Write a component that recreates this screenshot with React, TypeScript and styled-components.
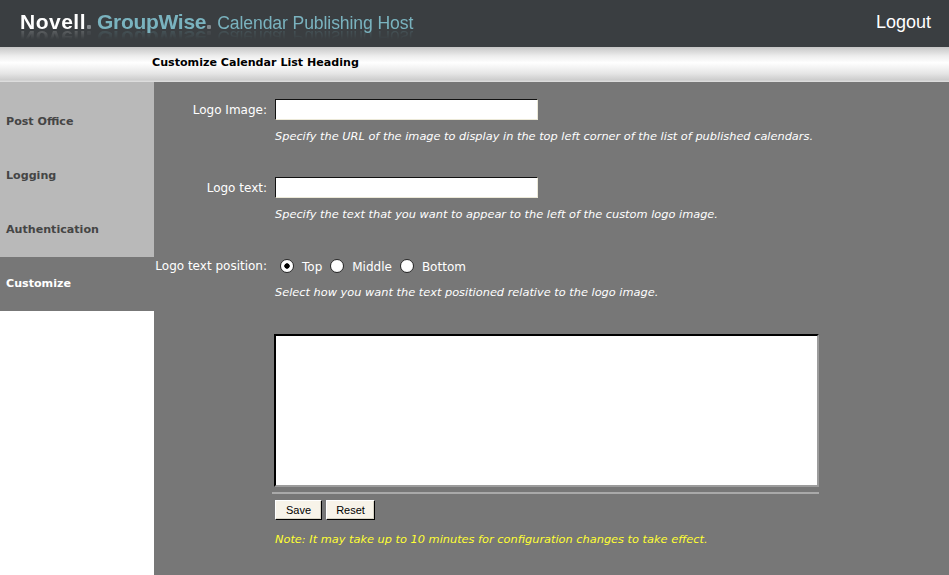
import React from "react";
import styled, { createGlobalStyle } from "styled-components";

const Global = createGlobalStyle`
  html, body { margin: 0; padding: 0; background: #ffffff; }
  body { font-family: "DejaVu Sans", Verdana, sans-serif; }
  * { box-sizing: border-box; }
`;

const Page = styled.div`
  min-height: 100vh;
  display: flex;
  flex-direction: column;
`;

const Header = styled.header`
  height: 47px;
  background: #3a3e41;
  display: flex;
  align-items: center;
  justify-content: space-between;
  padding: 0 18px 2px 20px;
  font-family: "Liberation Sans", Arial, sans-serif;
`;

const Title = styled.div`
  display: flex;
  align-items: baseline;
  white-space: nowrap;
  margin-bottom: 2px;
  -webkit-box-reflect: below -8px linear-gradient(transparent 45%, rgba(255, 255, 255, 0.28));
`;

const Brand = styled.span<{ $color: string; $ls: number }>`
  font-weight: bold;
  font-size: 21px;
  color: ${(p) => p.$color};
  letter-spacing: ${(p) => p.$ls}px;
`;

const Dot = styled.span<{ $after: number }>`
  display: inline-block;
  width: 4px;
  height: 4px;
  margin: 0 ${(p) => p.$after}px 0 1px;
  background: #82878b;
  border-radius: 1px;
`;

const Product = styled.span`
  font-size: 17.6px;
  color: #7ab3bf;
  letter-spacing: -0.1px;
`;

const Logout = styled.a`
  color: #ffffff;
  font-size: 18px;
  text-decoration: none;
  cursor: pointer;
`;

const HeadingBar = styled.div`
  height: 35px;
  background: linear-gradient(#c6c6c6 0%, #ececec 25%, #ffffff 45%, #e6e6e6 75%, #cdcdcd 94%, #e2e2e2 100%);
  display: flex;
  align-items: center;
  padding: 0 0 4px 152px;
  font-size: 11.1px;
  font-weight: bold;
  color: #000000;
`;

const Body = styled.div`
  flex: 1;
  display: flex;
`;

const Sidebar = styled.nav`
  width: 154px;
  flex: none;
  align-self: flex-start;
  background: #b9b9b9;
  padding-top: 13px;
`;

const NavItem = styled.div<{ $active?: boolean }>`
  height: 54px;
  display: flex;
  align-items: center;
  padding: 0 0 2px 6px;
  font-size: 11.1px;
  font-weight: bold;
  color: ${(p) => (p.$active ? "#ffffff" : "#454545")};
  background: ${(p) => (p.$active ? "#777777" : "transparent")};
  cursor: pointer;
`;

const Main = styled.main`
  flex: 1;
  background: #777777;
  padding-top: 17px;
  display: flex;
  flex-direction: column;
  gap: 34px;
`;

const Field = styled.div`
  display: grid;
  grid-template-columns: 121px 1fr;
`;

const Label = styled.label`
  padding-right: 8px;
  font-size: 12px;
  color: #ffffff;
  display: flex;
  align-items: center;
  justify-content: flex-end;
  height: 21px;
  white-space: nowrap;
`;

const Control = styled.div`
  grid-column: 2;
  display: flex;
  flex-direction: column;
  align-items: flex-start;
`;

const TextInput = styled.input`
  width: 263px;
  height: 21px;
  border: 1px solid;
  border-color: #111111 #ece9d8 #ece9d8 #111111;
  background: #ffffff;
  padding: 0 3px;
  font-size: 12px;
  outline: none;
`;

const Hint = styled.div<{ $color?: string }>`
  margin-top: 10px;
  font-size: 11.35px;
  line-height: 13px;
  font-style: italic;
  color: ${(p) => p.$color || "#ffffff"};
  white-space: nowrap;
`;

const RadioRow = styled.div`
  height: 21px;
  display: flex;
  align-items: center;
`;

const Radio = styled.input`
  appearance: none;
  -webkit-appearance: none;
  flex: none;
  width: 14px;
  height: 14px;
  margin: 0 8px 0 8px;
  border-radius: 50%;
  border: 1px solid #2a2a2a;
  background: radial-gradient(circle at 45% 40%, #ffffff 55%, #e6e6e6 100%);
  &:first-child {
    margin-left: 5px;
  }
  &:checked {
    background: radial-gradient(circle, #000000 0 2.4px, #ffffff 3px);
  }
`;

const RadioText = styled.span`
  font-size: 12px;
  color: #ffffff;
  margin-top: 3px;
`;

const TextArea = styled.textarea`
  margin: 1px 0 0 -1px;
  width: 545px;
  height: 153px;
  border: 2px solid;
  border-color: #000000 #9c9c9c #9c9c9c #000000;
  background: #ffffff;
  resize: none;
  outline: none;
`;

const Rule = styled.div`
  margin: 5px 0 0 -3px;
  width: 547px;
  height: 2px;
  background: #a9a9a9;
`;

const Buttons = styled.div`
  margin-top: 6px;
  display: flex;
  gap: 4px;
`;

const Button = styled.button<{ $w: number }>`
  width: ${(p) => p.$w}px;
  height: 20px;
  padding: 0;
  background: #f7f3e9;
  border: 1px solid;
  border-color: #ffffff #000000 #000000 #ffffff;
  box-shadow: inset -1px -1px 0 #d6d2c4;
  font-family: "Liberation Sans", Arial, sans-serif;
  font-size: 11px;
  color: #000000;
  cursor: pointer;
`;

const Note = styled(Hint)`
  margin-top: 13px;
`;

export default function App() {
  return (
    <Page>
      <Global />
      <Header>
        <Title>
          <Brand $color="#ffffff" $ls={0.5}>Novell</Brand>
          <Dot $after={6} />
          <Brand $color="#7ab3bf" $ls={-0.3}>GroupWise</Brand>
          <Dot $after={6} />
          <Product>Calendar Publishing Host</Product>
        </Title>
        <Logout>Logout</Logout>
      </Header>
      <HeadingBar>Customize Calendar List Heading</HeadingBar>
      <Body>
        <Sidebar>
          <NavItem>Post Office</NavItem>
          <NavItem>Logging</NavItem>
          <NavItem>Authentication</NavItem>
          <NavItem $active>Customize</NavItem>
        </Sidebar>
        <Main>
          <Field>
            <Label>Logo Image:</Label>
            <Control>
              <TextInput type="text" />
              <Hint>Specify the URL of the image to display in the top left corner of the list of published calendars.</Hint>
            </Control>
          </Field>
          <Field>
            <Label>Logo text:</Label>
            <Control>
              <TextInput type="text" />
              <Hint>Specify the text that you want to appear to the left of the custom logo image.</Hint>
            </Control>
          </Field>
          <Field>
            <Label>Logo text position:</Label>
            <Control>
              <RadioRow>
                <Radio type="radio" name="pos" defaultChecked />
                <RadioText>Top</RadioText>
                <Radio type="radio" name="pos" />
                <RadioText>Middle</RadioText>
                <Radio type="radio" name="pos" />
                <RadioText>Bottom</RadioText>
              </RadioRow>
              <Hint>Select how you want the text positioned relative to the logo image.</Hint>
            </Control>
          </Field>
          <Field>
            <Control>
              <TextArea />
              <Rule />
              <Buttons>
                <Button $w={47}>Save</Button>
                <Button $w={49}>Reset</Button>
              </Buttons>
              <Note $color="#ffff33">Note: It may take up to 10 minutes for configuration changes to take effect.</Note>
            </Control>
          </Field>
        </Main>
      </Body>
    </Page>
  );
}
